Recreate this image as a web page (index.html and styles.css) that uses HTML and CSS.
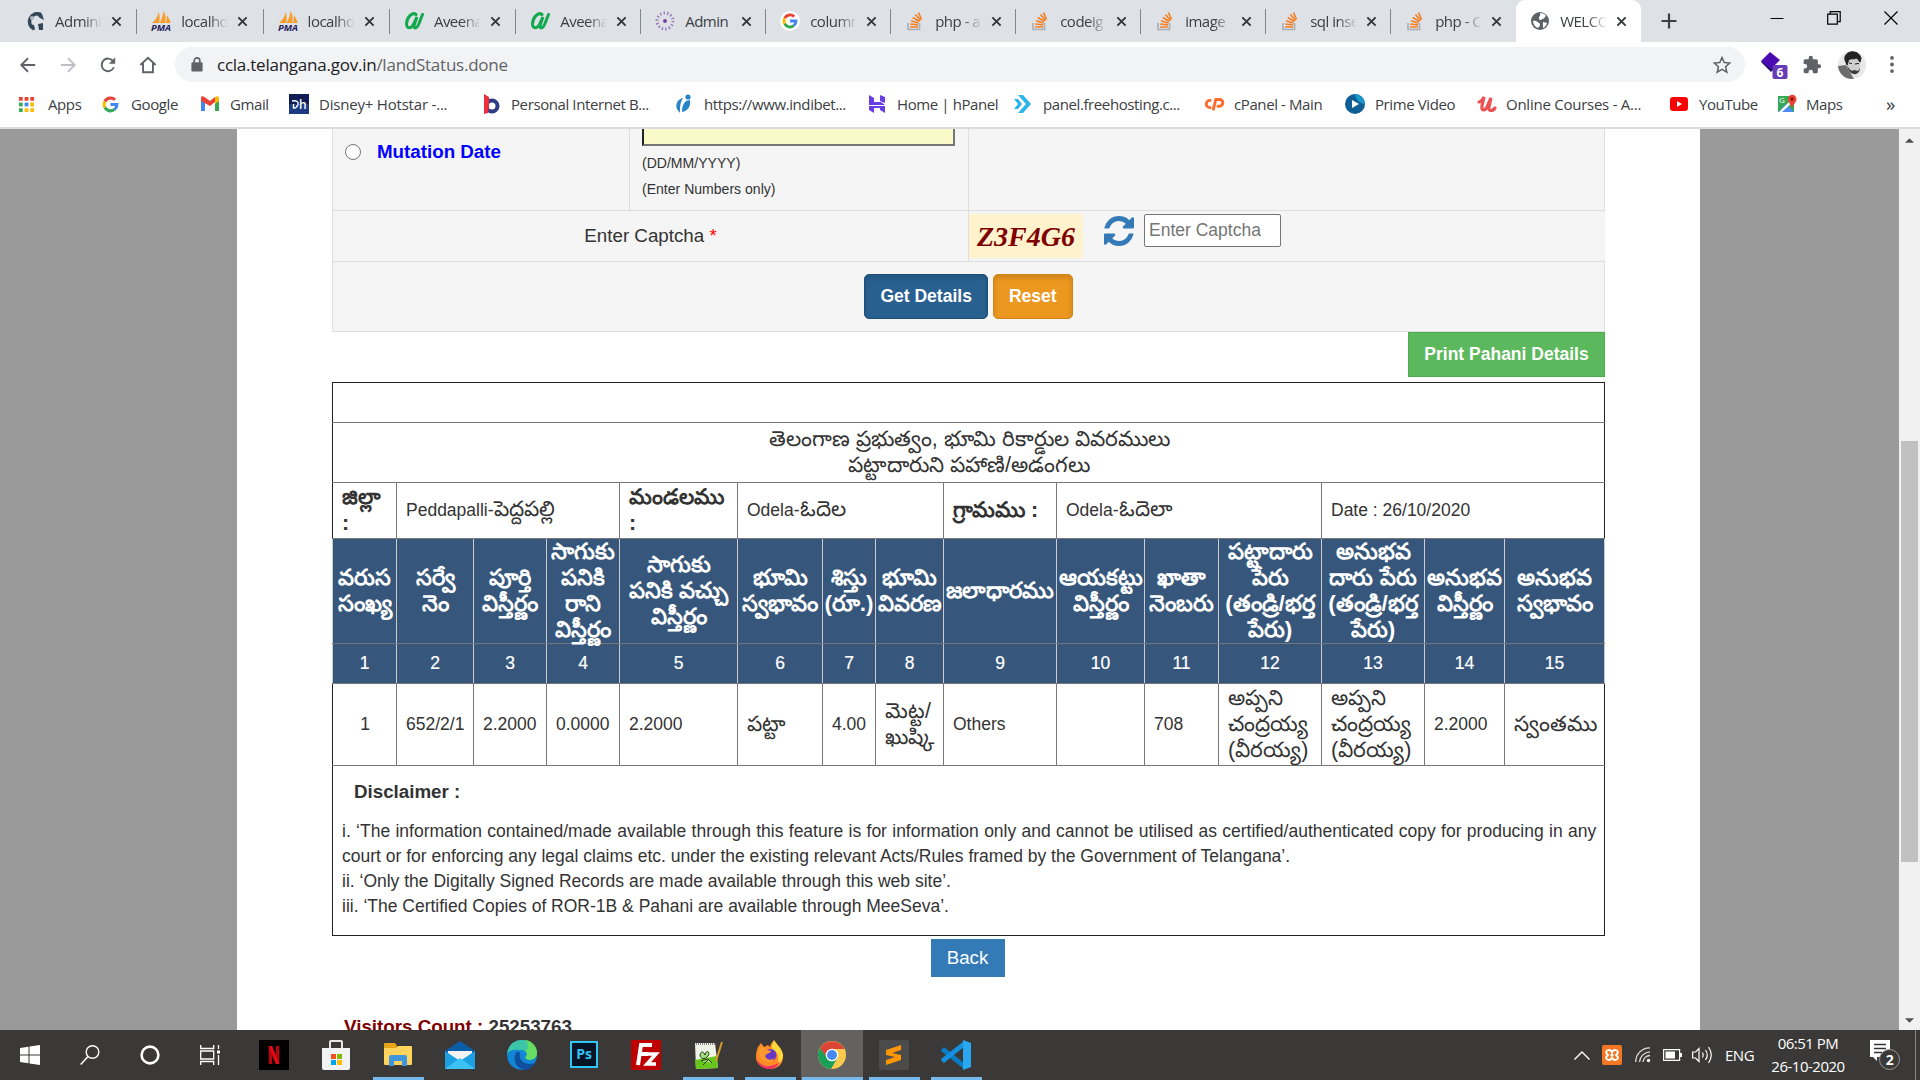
FILE: index.html
```html
<!DOCTYPE html>
<html lang="en">
<head>
<meta charset="utf-8">
<title>WELCOME</title>
<link rel="stylesheet" href="styles.css">
</head>
<body>
<svg class="defs" aria-hidden="true">
  <symbol id="x" viewBox="0 0 12 12"><path d="M1.5 1.5l9 9M10.500 1.500l-9 9" stroke="#33373b" stroke-width="2.100" fill="none"/></symbol>
  <symbol id="pma" viewBox="0 0 20 20"><path d="M1 12C5 9 7 5 7.500 1 9 5 9 9 8 12zM8.500 12C11 8 12 4 12.500 0 15 4 15 9 14 12zM14.500 12C16 9 16 6 15.500 4 18 7 19 9 19.500 12z" fill="#f89c2a"/><text x="0" y="19.500" font-size="8.500" font-weight="700" font-style="italic" fill="#24245c" textLength="20" lengthAdjust="spacingAndGlyphs">PMA</text></symbol>
  <symbol id="av" viewBox="0 0 20 20"><path d="M12 3.500C8 .5 2.500 7 2.500 13c.2 5.500 4.500 4.500 7 .5l3.500-7.500-2.500 7c-1.500 5.500 2 5.500 4.500-.5l3.500-9" fill="none" stroke="#12a84e" stroke-width="3" stroke-linecap="round"/></symbol>
  <symbol id="so" viewBox="0 0 20 20"><path d="M3 12v6.500h11.500V12" fill="none" stroke="#a9b0b8" stroke-width="1.700"/><path d="M5 16h8M5.200 13l7.800.8M6 9.800l7.400 2.200M7.800 6.500l6.600 4M10.500 3.500l5 6M13.500 1.500l3 7" stroke="#f48024" stroke-width="1.700"/></symbol>
  <symbol id="g" viewBox="0 0 20 20"><g fill="none" stroke-width="3.600"><path d="M15.300 4.500A7.500 7.500 0 0 0 3.400 6.500" stroke="#ea4335"/><path d="M3.400 6.500a7.600 7.600 0 0 0 0 7" stroke="#fbbc05"/><path d="M3.400 13.500a7.500 7.500 0 0 0 11.300 2.300" stroke="#34a853"/><path d="M14.700 15.800A7.500 7.500 0 0 0 17.500 10H10" stroke="#4285f4"/></g></symbol>
</svg>

<header class="browser">
  <div class="tabs">
    <div class="tab wide"><svg class="fav" viewBox="0 0 20 20"><path d="M16 3.500A8 8 0 1 0 9 18" fill="none" stroke="#33475b" stroke-width="3.500"/><path d="M9 1l8 2 2 6-4-2zM13 13l5-1v7h-4zM4 13l5 1 1 5-4-2z" fill="#33475b"/><circle cx="7" cy="7" r="2" fill="#a9b5c0"/></svg><span class="name">Admini</span><svg class="close"><use href="#x"/></svg></div>
    <div class="tab wide"><svg class="fav"><use href="#pma"/></svg><span class="name">localho</span><svg class="close"><use href="#x"/></svg></div>
    <div class="tab wide"><svg class="fav"><use href="#pma"/></svg><span class="name">localho</span><svg class="close"><use href="#x"/></svg></div>
    <div class="tab wide"><svg class="fav"><use href="#av"/></svg><span class="name">Aveena</span><svg class="close"><use href="#x"/></svg></div>
    <div class="tab"><svg class="fav"><use href="#av"/></svg><span class="name">Aveena</span><svg class="close"><use href="#x"/></svg></div>
    <div class="tab"><svg class="fav" viewBox="0 0 20 20"><circle cx="10" cy="10" r="8" fill="none" stroke="#9b7bb8" stroke-width="3" stroke-dasharray="1.400 2.200"/><circle cx="10" cy="10" r="2" fill="#7b3fa0"/></svg><span class="name plain">Admin</span><svg class="close"><use href="#x"/></svg></div>
    <div class="tab"><svg class="fav disc"><use href="#g"/></svg><span class="name">column</span><svg class="close"><use href="#x"/></svg></div>
    <div class="tab"><svg class="fav"><use href="#so"/></svg><span class="name">php - a</span><svg class="close"><use href="#x"/></svg></div>
    <div class="tab"><svg class="fav"><use href="#so"/></svg><span class="name">codeig</span><svg class="close"><use href="#x"/></svg></div>
    <div class="tab"><svg class="fav"><use href="#so"/></svg><span class="name">image</span><svg class="close"><use href="#x"/></svg></div>
    <div class="tab"><svg class="fav"><use href="#so"/></svg><span class="name">sql inse</span><svg class="close"><use href="#x"/></svg></div>
    <div class="tab last"><svg class="fav"><use href="#so"/></svg><span class="name">php - C</span><svg class="close"><use href="#x"/></svg></div>
    <div class="tab active"><svg class="fav" viewBox="0 0 20 20"><circle cx="10" cy="10" r="9" fill="#5f6368"/><path d="M3 10c3-1 4 1 6 2s1 3-1 5c-3-1-5-4-5-7zM10 2c3 0 5 1 6 3-2 1-1 3-4 3-1 2-3 1-3-1s2-2 1-5zM13 11l4 1c-1 3-2 4-4 5z" fill="#fff"/></svg><span class="name">WELCO</span><svg class="close"><use href="#x"/></svg></div>
    <svg class="plus" viewBox="0 0 16 16"><path d="M8 .5v15M.5 8h15" stroke="#3c4043" stroke-width="2.200"/></svg>
    <div class="window-buttons">
      <svg width="14" height="14" viewBox="0 0 14 14"><path d="M.5 7.500h13" stroke="#000" stroke-width="1"/></svg>
      <svg width="14" height="14" viewBox="0 0 14 14"><path d="M.7 3.200h9.600v10H.7zM3.200 3V.7h10v10h-2.700" fill="none" stroke="#000" stroke-width="1.200"/></svg>
      <svg width="14" height="14" viewBox="0 0 14 14"><path d="M.5.5l13 13M13.500.5l-13 13" stroke="#000" stroke-width="1.200"/></svg>
    </div>
  </div>

  <div class="toolbar">
    <svg class="nav" viewBox="0 0 20 20"><path d="M18 10H3M10 2.500L2.500 10l7.500 7.500" fill="none" stroke="#5f6368" stroke-width="2"/></svg>
    <svg class="nav" viewBox="0 0 20 20"><path d="M2 10h15M10 2.500l7.500 7.500-7.500 7.500" fill="none" stroke="#bdc1c6" stroke-width="2"/></svg>
    <svg class="nav" viewBox="0 0 20 20"><path d="M16.500 12.500A7 7 0 1 1 15.500 5.500" fill="none" stroke="#5f6368" stroke-width="2.100"/><path d="M18 1.500v7h-7z" fill="#5f6368"/></svg>
    <svg class="nav" viewBox="0 0 20 20"><path d="M1.500 10L10 2l8.500 8M4.500 8v10h11V8" fill="none" stroke="#5f6368" stroke-width="2.100"/></svg>
    <div class="omnibox">
      <svg class="lock" viewBox="0 0 12 16"><rect y="5.500" width="12" height="10" rx="1.500" fill="#5f6368"/><path d="M3 6V4a3 3 0 0 1 6 0v2" fill="none" stroke="#5f6368" stroke-width="1.800"/></svg>
      <span class="url">ccla.telangana.gov.in<span class="path">/landStatus.done</span></span>
      <svg class="star" viewBox="0 0 20 20"><path d="M10 1.800l2.500 5.500 6 .6-4.500 4 1.300 6-5.300-3.100-5.300 3.100 1.300-6-4.500-4 6-.6z" fill="none" stroke="#5f6368" stroke-width="1.700"/></svg>
    </div>
    <svg class="ext" viewBox="0 0 28 28"><path d="M1 11l10 10 5-5-10-9z" fill="#22106b"/><path d="M10 1l10 8-9 9-10-8z" fill="#4a0bb0"/><rect x="12.500" y="14" width="15" height="14" rx="2" fill="#673ab7"/><text x="20" y="25.500" font-size="12" font-weight="700" fill="#fff" text-anchor="middle">6</text></svg>
    <svg class="puzzle" viewBox="0 0 24 24"><path d="M20.500 11H19V7a2 2 0 0 0-2-2h-4V3.500a2.500 2.500 0 0 0-5 0V5H4a2 2 0 0 0-2 2v3.800h1.500a2.700 2.700 0 0 1 0 5.400H2V20a2 2 0 0 0 2 2h3.800v-1.500a2.700 2.700 0 0 1 5.400 0V22H17a2 2 0 0 0 2-2v-4h1.500a2.500 2.500 0 0 0 0-5z" fill="#5f6368"/></svg>
    <svg class="avatar" viewBox="0 0 28 28"><defs><clipPath id="av-clip"><circle cx="14" cy="14" r="14"/></clipPath></defs><g clip-path="url(#av-clip)"><path d="M0 0h28v28H0z" fill="#e8e8e8"/><path d="M0 15l8-1 8 14H0z" fill="#6d6d6d"/><path d="M8 8c0-7 15-7 15 1l-1 8-4 6c-6 1-9-6-10-10z" fill="#d0d0d0"/><path d="M7 9C5 0 20-3 23 7l-1 4-3-4c-4 2-8-1-9 4l-1 3zM11 12l3 .6M17 13l4-.6" fill="#222" stroke="#222"/><path d="M9 14c1 7 6 10 9 9 3-1 4-4 4-6l-2 3-4-1c-3 2-5-1-7-5z" fill="#3a3a3a"/></g></svg>
    <svg class="dots" viewBox="0 0 4 18"><circle cx="2" cy="2" r="2"/><circle cx="2" cy="9" r="2"/><circle cx="2" cy="16" r="2"/></svg>
  </div>

  <nav class="bookmarks">
    <a class="bm b1"><svg viewBox="0 0 18 18"><path d="M1 1h4v4H1zM7 1h4v4H7zM13 1h4v4h-4z" fill="#ea4335"/><path d="M1 7h4v4H1z" fill="#34a853"/><path d="M7 7h4v4H7z" fill="#4285f4"/><path d="M13 7h4v4h-4zM7 13h4v4H7zM13 13h4v4h-4z" fill="#fbbc05"/><path d="M1 13h4v4H1z" fill="#34a853"/></svg><span>Apps</span></a>
    <a class="bm b2"><svg><use href="#g"/></svg><span>Google</span></a>
    <a class="bm b3"><svg viewBox="0 0 20 20"><path d="M1 5v12h4V9z" fill="#4285f4"/><path d="M19 5v12h-4V9z" fill="#34a853"/><path d="M1 7V4c0-2 2-2 3.500-1L10 7l5-4v5l-5 4z" fill="#ea4335"/><path d="M15 3c2-1.500 4-1 4 1v3l-4 3z" fill="#fbbc05"/></svg><span>Gmail</span></a>
    <a class="bm b4"><svg viewBox="0 0 20 20"><path d="M0 0h20v20H0z" fill="#111b54"/><path d="M0 10h20v10H0z" fill="#1c3a82"/><path d="M3 7q7-1 6 3.500-1.500 4-4.500 3.500V10" fill="none" stroke="#fff" stroke-width="1.400"/><text x="10" y="14.500" font-size="12" font-weight="600" fill="#fff">h</text></svg><span>Disney+ Hotstar -...</span></a>
    <a class="bm b5"><svg viewBox="0 0 20 20"><circle cx="11" cy="12" r="5.500" fill="none" stroke="#2e3c86" stroke-width="4"/><path d="M3 0l5 3v9l-1 7-4 1z" fill="#ee2e3c"/></svg><span>Personal Internet B...</span></a>
    <a class="bm b6"><svg viewBox="0 0 20 20"><path d="M9 4C4 5 1 10 3 15l3 4c0-6 0-10 3-15zM8 18c0-5 1-8 4-11l4-1c1 6-2 11-8 12z" fill="#2785c7"/><circle cx="14" cy="3" r="2.600" fill="#2785c7"/></svg><span>https://www.indibet...</span></a>
    <a class="bm b7"><svg viewBox="0 0 20 20"><path d="M2 1l5 3v4h7l4 3H2zM13 1l5 2v6l-5-2zM2 12h16v7l-5-3v-2H7v5l-5-3z" fill="#673de6"/></svg><span>Home | hPanel</span></a>
    <a class="bm b8"><svg viewBox="0 0 20 20"><path d="M5 1h5l8 9-8 9H5l8-9zM1 5h4l4 5-4 5H1l4-5z" fill="#2cb5e8"/></svg><span>panel.freehosting.c...</span></a>
    <a class="bm b9"><svg viewBox="0 0 22 20"><path d="M8 6H6.500a4 4 0 0 0 0 8H8M10 17l3-12h4a3.500 3.500 0 0 1 0 7.500h-3" fill="none" stroke="#ff6c2c" stroke-width="3.200"/></svg><span>cPanel - Main</span></a>
    <a class="bm b10"><svg viewBox="0 0 20 20"><circle cx="10" cy="10" r="10" fill="#0f5f94"/><path d="M10 0a10 10 0 0 1 10 10c-4 0-10-4-10-10z" fill="#1a98ca"/><path d="M7 6l7 4-7 4z" fill="#fff"/></svg><span>Prime Video</span></a>
    <a class="bm b11"><svg viewBox="0 0 20 20"><path d="M2 8c3 0 4-3 5-5L5 12c-1 5 3 5 5 1l4-9-2 9c-1 5 4 4 6 1" fill="none" stroke="#ec5252" stroke-width="3.200" stroke-linecap="round"/></svg><span>Online Courses - A...</span></a>
    <a class="bm b12"><svg viewBox="0 0 20 20"><rect x="1" y="3" width="18" height="14" rx="3" fill="#f00"/><path d="M8 7l5 3-5 3z" fill="#fff"/></svg><span>YouTube</span></a>
    <a class="bm b13"><svg viewBox="0 0 20 20"><path d="M1 2h16v16H1z" fill="#34a853"/><path d="M1 18l8-8 8 8z" fill="#4d8df5"/><path d="M2 18L17 3v4L5 18z" fill="#fff"/><path d="M15 14c-1-4-4-5-4-9a4.200 4.200 0 0 1 8.500 0c0 4-3.500 5-4.500 9z" fill="#ea4335"/><circle cx="15" cy="5" r="1.700" fill="#811"/><text x="2" y="8.500" font-size="8" fill="#fff">G</text></svg><span>Maps</span></a>
    <span class="more">»</span>
  </nav>
</header>

<div class="viewport">
  <main class="page">
    <table class="form">
      <colgroup><col class="f1"><col class="f2"><col class="f3"></colgroup>
      <tr class="date-row">
        <td><label class="radio-line"><span class="radio"></span><b>Mutation Date</b></label></td>
        <td class="date-cell"><div class="date-input"></div><p>(DD/MM/YYYY)</p><p>(Enter Numbers only)</p></td>
        <td></td>
      </tr>
      <tr class="captcha-row">
        <td colspan="2" class="captcha-label">Enter Captcha <span class="req">*</span></td>
        <td class="open"><div class="captcha"><span class="code">Z3F4G6</span>
          <svg class="refresh" viewBox="0 0 1536 1536"><path fill="#337ab7" d="M1511 928q0 5-1 7-64 268-268 434.500T764 1536q-146 0-282.500-55T238 1324l-129 129q-19 19-45 19t-45-19-19-45V960q0-26 19-45t45-19h448q26 0 45 19t19 45-19 45l-137 137q71 66 161 102t187 36q134 0 250-65t186-179q11-17 53-117 8-23 30-23h192q13 0 22.500 9.500t9.500 22.500zm25-800v448q0 26-19 45t-45 19h-448q-26 0-45-19t-19-45 19-45l138-138Q969 256 768 256q-134 0-250 65T332 500q-11 17-53 117-8 23-30 23H50q-13 0-22.500-9.500T18 608v-7q65-268 270-434.500T768 0q146 0 284 55.500T1297 212l130-129q19-19 45-19t45 19 19 45z"/></svg>
          <div class="captcha-input">Enter Captcha</div></div></td>
      </tr>
      <tr class="button-row"><td colspan="3"><div class="buttons"><button class="btn primary">Get Details</button><button class="btn warning">Reset</button></div></td></tr>
    </table>

    <div class="print-line"><button class="btn success">Print Pahani Details</button></div>

    <table class="pahani">
      <colgroup><col class="c1"><col class="c2"><col class="c3"><col class="c4"><col class="c5"><col class="c6"><col class="c7"><col class="c8"><col class="c9"><col class="c10"><col class="c11"><col class="c12"><col class="c13"><col class="c14"><col class="c15"></colgroup>
      <tr class="blank"><td colspan="15"></td></tr>
      <tr class="title"><td colspan="15"><div class="te" lang="te">తెలంగాణ ప్రభుత్వం, భూమి రికార్డుల వివరములు<br>పట్టాదారుని పహాణి/అడంగలు</div></td></tr>
      <tr class="place">
        <td><b class="te" lang="te">జిల్లా<br>:</b></td><td colspan="3">Peddapalli-<span class="te" lang="te">పెద్దపల్లి</span></td>
        <td><b class="te" lang="te">మండలము<br>:</b></td><td colspan="3">Odela-<span class="te" lang="te">ఓదెల</span></td>
        <td><b class="te" lang="te">గ్రామము :</b></td><td colspan="3">Odela-<span class="te" lang="te">ఓదెలా</span></td>
        <td colspan="3">Date : 26/10/2020</td>
      </tr>
      <tr class="heads" lang="te">
        <th>వరుస<br>సంఖ్య</th><th>సర్వే<br>నెం</th><th>పూర్తి<br>విస్తీర్ణం</th><th>సాగుకు<br>పనికి<br>రాని<br>విస్తీర్ణం</th><th>సాగుకు<br>పనికి వచ్చు<br>విస్తీర్ణం</th><th>భూమి<br>స్వభావం</th><th>శిస్తు<br>(రూ.)</th><th>భూమి<br>వివరణ</th><th>జలాధారము</th><th>ఆయకట్టు<br>విస్తీర్ణం</th><th>ఖాతా<br>నెంబరు</th><th>పట్టాదారు<br>పేరు<br>(తండ్రి/భర్త<br>పేరు)</th><th>అనుభవ<br>దారు పేరు<br>(తండ్రి/భర్త<br>పేరు)</th><th>అనుభవ<br>విస్తీర్ణం</th><th>అనుభవ<br>స్వభావం</th>
      </tr>
      <tr class="nums"><th>1</th><th>2</th><th>3</th><th>4</th><th>5</th><th>6</th><th>7</th><th>8</th><th>9</th><th>10</th><th>11</th><th>12</th><th>13</th><th>14</th><th>15</th></tr>
      <tr class="record">
        <td class="mid">1</td><td>652/2/1</td><td>2.2000</td><td>0.0000</td><td>2.2000</td><td><div class="te" lang="te">పట్టా</div></td><td>4.00</td><td><div class="te" lang="te">మెట్ట/<br>ఖుష్కి</div></td><td>Others</td><td></td><td>708</td><td><div class="te" lang="te">అప్పని<br>చంద్రయ్య<br>(వీరయ్య)</div></td><td><div class="te" lang="te">అప్పని<br>చంద్రయ్య<br>(వీరయ్య)</div></td><td>2.2000</td><td><div class="te" lang="te">స్వంతము</div></td>
      </tr>
      <tr class="disclaimer"><td colspan="15">
        <h4>Disclaimer :</h4>
        <p>i. ‘The information contained/made available through this feature is for information only and cannot be utilised as certified/authenticated copy for producing in any court or for enforcing any legal claims etc. under the existing relevant Acts/Rules framed by the Government of Telangana’.</p>
        <p>ii. ‘Only the Digitally Signed Records are made available through this web site’.</p>
        <p>iii. ‘The Certified Copies of ROR-1B &amp; Pahani are available through MeeSeva’.</p>
      </td></tr>
    </table>

    <div class="back-line"><button class="back">Back</button></div>
    <p class="visitors"><span>Visitors Count :</span> 25253763</p>
  </main>
  <div class="scrollbar">
    <svg viewBox="0 0 10 5"><path d="M0 5l5-5 5 5z" fill="#505050"/></svg>
    <div class="thumb"></div>
    <svg viewBox="0 0 10 5"><path d="M0 0l5 5 5-5z" fill="#505050"/></svg>
  </div>
</div>

<footer class="taskbar">
  <div class="system">
    <div class="task"><svg viewBox="0 0 20 20" width="20" height="20"><path d="M0 3l8.500-1.200v7.700H0zM9.500 1.600L20 0v9.500H9.500zM0 10.500h8.500v7.700L0 17zM9.500 10.500H20V20L9.500 18.400z" fill="#fff"/></svg></div>
    <div class="task"><svg viewBox="0 0 20 20" width="20" height="20"><circle cx="12.500" cy="7" r="6.300" fill="none" stroke="#fff" stroke-width="1.400"/><path d="M8 11.500L.7 19.500" stroke="#fff" stroke-width="1.500"/></svg></div>
    <div class="task"><svg viewBox="0 0 20 20" width="20" height="20"><circle cx="10" cy="10" r="8.400" fill="none" stroke="#fff" stroke-width="2.600"/></svg></div>
    <div class="task"><svg viewBox="0 0 20 20" width="20" height="20"><path d="M.7 0v3.500h13V0M.7 20v-3.500h13V20M.7 6h13v8H.7zM18.500 0v4M18.500 10v10" fill="none" stroke="#fff" stroke-width="1.300"/><path d="M17 5.500h3v3h-3z" fill="#fff"/></svg></div>
  </div>
  <div class="apps">
    <div class="task"><svg viewBox="0 0 30 30"><path d="M0 0h30v30H0z" fill="#000"/><path d="M11.500 6v18M18.500 6v18" stroke="#b20710" stroke-width="3.500"/><path d="M9.700 6h3.500l7 18h-3.500z" fill="#e50914"/></svg></div>
    <div class="task"><svg viewBox="0 0 30 30"><path d="M9 9V2q0-1 1-1h10q1 0 1 1v7" fill="none" stroke="#e8e8e8" stroke-width="2"/><path d="M1 8h28v20q0 2-2 2H3q-2 0-2-2z" fill="#f2f2f2"/><path d="M10 14h5v5h-5z" fill="#f25022"/><path d="M16 14h5v5h-5z" fill="#7fba00"/><path d="M10 20h5v5h-5z" fill="#00a4ef"/><path d="M16 20h5v5h-5z" fill="#ffb900"/></svg></div>
    <div class="task open"><svg viewBox="0 0 30 30"><path d="M1 4q0-1 1-1h10l2 3v5H1z" fill="#e8a317"/><path d="M1 8h12l2-2h13q1 0 1 1v17q0 1-1 1H2q-1 0-1-1z" fill="#ffd35c"/><path d="M6 26v-9q0-2 2-2h14q2 0 2 2v9h-5v-5h-8v5z" fill="#3f96dd"/></svg></div>
    <div class="task"><svg viewBox="0 0 30 30"><path d="M0 11L15 1l15 10v2H0z" fill="#0a5ea8"/><path d="M3 11h24v12H3z" fill="#f3f3f3"/><path d="M0 11l15 10 15-10v18H0z" fill="#1da0e2"/><path d="M0 29L15 18l15 11z" fill="#3cc2f4"/></svg></div>
    <div class="task"><svg viewBox="0 0 30 30"><circle cx="15" cy="15" r="15" fill="#1286d6"/><path d="M0 14C1 5 7 0 15 0s15 6 15 13c0 6-7 9-12 5 4-4 1-8-5-8C7 9 2 10 0 14z" fill="#3dc5a7"/><path d="M18 0c8 1 12 7 12 13s-7 9-12 5c3-3 2-6 0-7 4-2 4-7 0-11z" fill="#66dd62"/><path d="M9 13c-4 6 0 16 9 17 5-1 9-4 10-7-8 3-17-1-15-10-2-2-3-1-4 0z" fill="#104f9e"/></svg></div>
    <div class="task"><svg viewBox="0 0 30 30"><path d="M2 2h26v25H2z" fill="#071427" stroke="#31c5f4" stroke-width="2"/><text x="15" y="19" font-size="14" font-weight="700" fill="#31c5f4" text-anchor="middle">Ps</text></svg></div>
    <div class="task"><svg viewBox="0 0 30 30"><path d="M0 0h30v30H0z" fill="#bf0000"/><path d="M7 25L10 5h11M8 14h9" fill="none" stroke="#fff" stroke-width="4"/><path d="M14 14h11L16 24h9" fill="none" stroke="#fff" stroke-width="3.500"/></svg></div>
    <div class="task open"><svg viewBox="0 0 30 30"><path d="M2 3h20l3 25-22 1z" fill="#eef5e8"/><path d="M2 20l22-4 1 12-22 1z" fill="#68c51c"/><path d="M3 4h19" stroke="#888" stroke-width="2" stroke-dasharray="1 1"/><path d="M7 15c1-5 4-3 5 0 1-6 6-3 3 1-3 4-8 3-8-1zm1 6l7-2 4 4M10 25l5-5" fill="#a5dd7c" stroke="#233e18" stroke-width="1"/><path d="M29 2l-6 19" stroke="#d89a24" stroke-width="2"/></svg></div>
    <div class="task open"><svg viewBox="0 0 30 30"><path d="M3 7l3-4 3 4 4-2 2 2c1-5 4-6 4-7 2 4 8 8 9 15 1 9-6 14-13 14S0 24 1 16c0-4 1-6 2-9z" fill="#ff8b24"/><path d="M19 0c2 4 8 8 9 15 0 5-3 8-6 10 3-8 1-13-5-16-1-4 2-7 2-9z" fill="#ffd93b"/><path d="M1 16c2 12 17 13 24 5-2 5-6 8-12 8C6 28 2 24 1 16z" fill="#f42c68"/><circle cx="15.500" cy="15" r="6" fill="#6938c7"/><path d="M4 8c4-2 7 0 8 2l4 1c-1 3-5 2-6 5 2 5 7 4 9 2-1 6-12 6-14-2z" fill="#ff9a2e"/></svg></div>
    <div class="task open current"><svg viewBox="0 0 30 30"><circle cx="15" cy="15" r="14" fill="#fbc94b"/><path d="M2.900 8A14 14 0 0 1 27.500 9H15l-6 8z" fill="#dc4437"/><path d="M2.900 8A14 14 0 0 0 14 29l7-12-10 2z" fill="#1a9f59"/><circle cx="15" cy="15" r="6.300" fill="#fff"/><circle cx="15" cy="15" r="5" fill="#4688f1"/></svg></div>
    <div class="task open"><svg viewBox="0 0 30 30"><rect width="30" height="30" rx="2" fill="#4b4b4b"/><path d="M7 10l15-5v5l-9 3 9 2v5L7 25v-5l9-3-9-2z" fill="#ff9800"/></svg></div>
    <div class="task open"><svg viewBox="0 0 30 30"><path d="M0 10l3-3 20 16v6L0 11z" fill="#0a7bc4"/><path d="M0 20l3 3L23 7V1L0 19z" fill="#1490df"/><path d="M22 0l8 3v24l-8 3z" fill="#29a8f1"/></svg></div>
  </div>
  <div class="tray">
    <svg class="t-up" viewBox="0 0 16 9"><path d="M.5 8.500L8 1l7.500 7.500" fill="none" stroke="#fff" stroke-width="1.400"/></svg>
    <svg class="t-xampp" viewBox="0 0 20 20"><rect width="20" height="20" rx="2" fill="#f37623"/><path d="M10 7.500C8.500 3.500 3.500 5 4.200 8L6 10l-1.800 2c-.7 3 4.300 4.500 5.800.5 1.500 4 6.500 2.500 5.800-.5L14 10l1.800-2c.7-3-4.300-4.500-5.800-.5zM8.500 10h3" fill="none" stroke="#fff" stroke-width="1.900"/></svg>
    <svg class="t-wifi" viewBox="0 0 16 16"><g fill="none" stroke="#ddd" stroke-width="1.300"><path d="M.7 15A14 14 0 0 1 15 .8M4.500 15A11 11 0 0 1 15 4.800M8 15a7 7 0 0 1 7-6.500"/></g><circle cx="13.500" cy="13.500" r="1.700" fill="#fff"/></svg>
    <svg class="t-batt" viewBox="0 0 19 12"><path d="M.6.6h16v10.800h-16z" fill="none" stroke="#fff" stroke-width="1.200"/><path d="M17 4h2v4h-2zM2.500 2.500h9.500v7H2.500z" fill="#fff"/></svg>
    <svg class="t-vol" viewBox="0 0 20 18"><g fill="none" stroke="#fff" stroke-width="1.200"><path d="M.6 6h3L7 2.500v13L3.600 12h-3zM10.500 6.500q1.500 2.500 0 5M13.500 4q3.500 5 0 10M16.500 1q5.500 8 0 16"/></g></svg>
    <span class="lang">ENG</span>
    <div class="clock"><span>06:51 PM</span><span>26-10-2020</span></div>
    <svg class="t-note" viewBox="0 0 30 30"><path d="M0 0h20v17H7v4l-4-4H0z" fill="#fff"/><path d="M4 4.500h12M4 8.500h12M4 12.500h8" stroke="#333" stroke-width="1.300"/><circle cx="19.500" cy="19.500" r="10" fill="#3a3a39" stroke="#999"/><text x="19.500" y="24.500" font-size="14" font-weight="700" fill="#fff" text-anchor="middle">2</text></svg>
    <i class="peek"></i>
  </div>
</footer>
</body>
</html>
```
FILE: styles.css
```css
* { box-sizing: border-box; }
html, body { margin: 0; height: 100%; overflow: hidden; }
body { display: flex; flex-direction: column; width: 1920px; height: 1080px; background: #fff; font-family: "Liberation Sans", Arial, sans-serif; color: #333; }
p, h4 { margin: 0; }
svg { display: block; flex: none; overflow: visible; }
.defs { position: absolute; width: 0; height: 0; }

/* browser chrome */
.browser { flex: none; height: 129px; border-bottom: 2px solid #dadce0; font-family: "Open Sans", "Noto Sans", sans-serif; font-size: 15px; color: #3c4043; }
.tabs { display: flex; height: 42px; padding-left: 11px; background: #dee1e6; }
.tab { display: flex; align-items: center; position: relative; width: 125px; height: 42px; padding-left: 14px; flex: none; }
.tab.wide { width: 126.300px; }
.tab::after { content: ""; position: absolute; right: 0; top: 9px; width: 1px; height: 25px; background: #80868b; }
.tab.last::after, .tab.active::after { display: none; }
.fav { width: 20px; height: 20px; }
.fav.disc { background: #fff; border-radius: 50%; padding: 2px; }
.name { width: 47px; margin-left: 10px; overflow: hidden; white-space: nowrap; letter-spacing: -0.500px; -webkit-mask-image: linear-gradient(90deg, #000 60%, transparent 100%); mask-image: linear-gradient(90deg, #000 60%, transparent 100%); }
.name.plain { -webkit-mask-image: none; mask-image: none; }
.close { width: 11px; height: 11px; margin-left: 9px; }
.tab.active { background: #fff; border-radius: 9px 9px 0 0; }
.plus { width: 16px; height: 16px; margin: 13px 0 0 20px; }
.window-buttons { display: flex; gap: 43px; margin: 11px 22px 0 auto; }
.toolbar { display: flex; align-items: center; height: 45px; }
.nav { width: 18px; height: 18px; margin-left: 22px; }
.nav:first-child { margin-left: 19px; }
.omnibox { display: flex; align-items: center; width: 1570px; height: 35px; margin-left: 18px; padding: 0 14px 0 16px; border-radius: 18px; background: #f1f3f4; }
.lock { width: 12px; height: 15px; }
.url { margin-left: 14px; font-size: 17px; letter-spacing: -0.240px; color: #202124; }
.path { color: #5f6368; }
.star { width: 18px; height: 18px; margin-left: auto; }
.ext { width: 28px; height: 28px; margin-left: 15px; }
.puzzle { width: 20px; height: 20px; margin-left: 14px; }
.avatar { width: 28px; height: 28px; margin-left: 16px; }
.dots { width: 4px; height: 17px; margin-left: 24px; fill: #5f6368; }
.bookmarks { display: flex; align-items: center; height: 34px; padding-left: 18px; }
.bm { display: flex; align-items: center; flex: none; white-space: nowrap; letter-spacing: -0.400px; }
.bm svg { width: 20px; height: 20px; }
.bm span { margin-left: 10px; }
.b1 { width: 84px; } .b2 { width: 98px; } .b3 { width: 89px; } .b4 { width: 192px; letter-spacing: -0.200px; }
.b5 { width: 193px; } .b6 { width: 193px; } .b7 { width: 146px; } .b8 { width: 191px; }
.b9 { width: 141px; } .b10 { width: 132px; } .b11 { width: 192px; letter-spacing: -0.250px; } .b12 { width: 108px; } .b13 { width: 109px; }
.b1 svg, .b2 svg { width: 17px; height: 17px; }
.b1 span { margin-left: 13px; }
.b2 span { margin-left: 12px; }
.b11 span { margin-left: 9px; }
.b13 span { margin-left: 9px; }
.more { font-size: 19px; line-height: 20px; }

/* web page */
.viewport { display: flex; height: 901px; flex: none; background: #9a9a9a; overflow: hidden; }
.page { width: 1463px; margin-left: 237px; padding-left: 95px; background: #fff; font-size: 17.500px; line-height: 25px; }
table { border-collapse: collapse; table-layout: fixed; width: 1273px; }
.form { background: #f5f5f5; font-size: 18.750px; }
.form td { border: 1px solid #ddd; padding: 0; }
.f1 { width: 297px; } .f2 { width: 339px; } .f3 { width: 636px; }
.date-row td { height: 81px; vertical-align: top; border-top: 0; }
.radio-line { display: flex; align-items: center; padding: 10px 0 0 12px; color: #00f; }
.radio { width: 16px; height: 16px; margin-right: 16px; border: 1px solid #767676; border-radius: 50%; background: #fff; }
.form .date-cell { padding-left: 12px; font-size: 14.060px; line-height: 26px; }
.date-input { width: 313px; height: 17px; margin-bottom: 4px; border: 2px solid #767676; border-left-color: #222; border-top: 0; background: #fafac8; }
.captcha-row td { height: 51px; }
.form .captcha-label { text-align: center; }
.req { color: #f00; }
.form .captcha-row .open { border-right: 0; }
.captcha { display: flex; align-items: flex-start; height: 44px; }
.code { width: 114px; height: 44px; background: #fff2cc; color: #800000; font: italic bold 28px/46px "Liberation Serif", "Times New Roman", serif; text-align: center; }
.refresh { width: 30px; height: 30px; margin: 2px 10px 0 21px; }
.captcha-input { width: 137px; height: 33px; padding-left: 4px; border: 1px solid #767676; border-radius: 2px; background: #fff; color: #757575; font-size: 17.500px; line-height: 31px; }
.button-row td { height: 70px; }
.buttons { display: flex; justify-content: center; gap: 5px; }
.btn { height: 45px; padding: 0 15px; border: 1px solid; color: #fff; font: bold 17.500px "Liberation Sans", Arial, sans-serif; }
.primary, .warning { border-radius: 5px; box-shadow: inset 0 3px 5px rgba(0,0,0,.125); }
.primary { background: #286090; border-color: #204d74; }
.warning { background: #ec971f; border-color: #d58512; }
.success { width: 197px; background: #5cb85c; border-color: #4cae4c; }
.print-line { display: flex; justify-content: flex-end; width: 1273px; margin-bottom: 5px; }

.pahani { border: 1px solid #222; }
.pahani td, .pahani th { border: 1px solid #777; padding: 0 8px 0 9px; }
.pahani tr > :first-child { border-left-color: #222; }
.pahani tr > :last-child { border-right-color: #222; }
.c1 { width: 64px; } .c2 { width: 77px; } .c3 { width: 73px; } .c4 { width: 73px; } .c5 { width: 118px; }
.c6 { width: 85px; } .c7 { width: 53px; } .c8 { width: 68px; } .c9 { width: 113px; } .c10 { width: 88px; }
.c11 { width: 74px; } .c12 { width: 103px; } .c13 { width: 103px; } .c14 { width: 80px; } .c15 { width: 100px; }
.pahani td { white-space: nowrap; }
.te { font-size: 21.500px; line-height: 26px; font-weight: 300; }
b.te { display: block; font-weight: 700; }
span.te { line-height: 20px; }
.pahani .blank td { height: 40px; border-top-color: #222; }
.title td { height: 60px; text-align: center; }
.place td { height: 56px; }
.heads th { height: 105px; line-height: 26px; white-space: nowrap; font-size: 22.500px; }
.pahani .heads th, .pahani .nums th { padding: 0; background: #36577b; color: #fff; border-left-color: #ccc; border-right-color: #ccc; }
.nums th { height: 40px; }
.pahani .nums th { font-weight: 400; -webkit-text-stroke: .2px #fff; }
.record td { height: 82px; }
.pahani .mid { text-align: center; }
.pahani .disclaimer td { height: 170px; vertical-align: top; white-space: normal; text-align: justify; padding-top: 13px; border-bottom-color: #222; }
h4 { padding-left: 12px; margin-bottom: 15px; font-size: 18.750px; line-height: 25px; }
.back-line { display: flex; justify-content: center; width: 1271px; padding-top: 3px; }
.back { width: 74px; height: 38px; border: 0; background: #337ab7; color: #fff; font: 18.750px "Liberation Sans", Arial, sans-serif; }
.visitors { margin: 37px 0 0 12px; font-size: 18.750px; font-weight: 700; line-height: 26px; }
.visitors span { color: #800000; }
.scrollbar { display: flex; flex-direction: column; align-items: center; width: 21px; margin-left: auto; padding: 9px 0 7px; background: #f1f1f1; }
.scrollbar svg { width: 9px; height: 5px; }
.scrollbar svg:last-child { margin-top: auto; }
.thumb { width: 17px; height: 421px; margin-top: 298px; background: #c1c1c1; }

/* taskbar */
.taskbar { display: flex; height: 50px; flex: none; background: #3a3937; color: #fff; font-family: "Open Sans", "Noto Sans", sans-serif; }
.system, .apps { display: flex; }
.system .task { width: 60px; }
.apps { margin-left: 3px; }
.task { display: flex; align-items: center; justify-content: center; width: 62px; height: 50px; }
.apps .task svg { width: 30px; height: 30px; }
.apps .open { background: linear-gradient(#76b9ed, #76b9ed) center bottom / 51px 3px no-repeat; }
.apps .current { background: linear-gradient(#76b9ed, #76b9ed) center bottom / 61px 3px no-repeat, #636260; }
.tray { display: flex; align-items: center; width: 346px; margin-left: auto; font-size: 15px; letter-spacing: -0.500px; }
.t-up { width: 16px; height: 9px; }
.t-xampp { width: 20px; height: 20px; margin-left: 12px; }
.t-wifi { width: 16px; height: 16px; margin-left: 13px; }
.t-batt { width: 19px; height: 12px; margin-left: 12px; }
.t-vol { width: 20px; height: 18px; margin-left: 10px; }
.lang { width: 30px; margin-left: 13px; }
.clock { display: flex; flex-direction: column; align-items: center; width: 78px; margin-left: 14px; line-height: 23px; white-space: nowrap; }
.t-note { width: 30px; height: 30px; margin-left: 23px; }
.peek { width: 1px; height: 50px; margin-left: 15px; background: #888; }
```
